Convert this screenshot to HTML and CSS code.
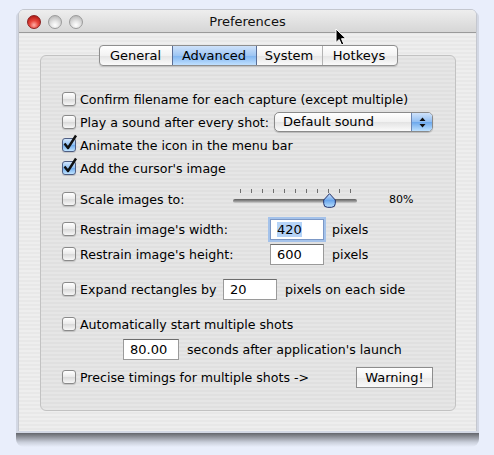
FILE: index.html
```html
<!DOCTYPE html>
<html lang="en">
<head>
    <meta charset="UTF-8">
    <title>Preferences</title>
    <link rel="stylesheet" href="styles.css">
</head>
<body>
    <div class="window">
        <div class="titlebar">
            <div class="lights">
                <span class="light red"></span>
                <span class="light"></span>
                <span class="light"></span>
            </div>
            <div class="title">Preferences</div>
        </div>

        <div class="content">
            <div class="tabs">
                <span class="tab">General</span>
                <span class="tab selected">Advanced</span>
                <span class="tab">System</span>
                <span class="tab">Hotkeys</span>
            </div>

            <div class="group">
                <div class="row r1">
                    <span class="check"></span>
                    <span class="label">Confirm filename for each capture (except multiple)</span>
                </div>
                <div class="row r2">
                    <span class="check"></span>
                    <span class="label w-sound">Play a sound after every shot:</span>
                    <div class="popup">
                        <span class="popup-text">Default sound</span>
                        <span class="popup-arrows">
                            <svg width="7" height="11" viewBox="0 0 7 11"><path d="M3.5 0.5 L6.5 4 H0.5 Z M0.5 7 H6.5 L3.5 10.5 Z" fill="#111"/></svg>
                        </span>
                    </div>
                </div>
                <div class="row r3">
                    <span class="check checked">
                        <svg width="16" height="17" viewBox="0 0 16 17"><path d="M2.5 9.5 L6 14 L14 1.5" fill="none" stroke="#111" stroke-width="2.4" stroke-linejoin="round"/></svg>
                    </span>
                    <span class="label">Animate the icon in the menu bar</span>
                </div>
                <div class="row r4">
                    <span class="check checked">
                        <svg width="16" height="17" viewBox="0 0 16 17"><path d="M2.5 9.5 L6 14 L14 1.5" fill="none" stroke="#111" stroke-width="2.4" stroke-linejoin="round"/></svg>
                    </span>
                    <span class="label">Add the cursor's image</span>
                </div>
                <div class="row r5">
                    <span class="check"></span>
                    <span class="label w-scale">Scale images to:</span>
                    <div class="slider">
                        <div class="ticks"></div>
                        <div class="track"></div>
                        <div class="rail">
                            <svg class="knob" style="left: 80%" width="13" height="15" viewBox="0 0 13 15">
                                <defs>
                                    <linearGradient id="kg" x1="0" y1="0" x2="0" y2="1">
                                        <stop offset="0" stop-color="#cfe3fb"/>
                                        <stop offset="0.5" stop-color="#6aa6ec"/>
                                        <stop offset="1" stop-color="#b9e0ff"/>
                                    </linearGradient>
                                </defs>
                                <path d="M6.5 0.7 L12.3 7 V10.5 A3.8 3.8 0 0 1 8.5 14.3 H4.5 A3.8 3.8 0 0 1 0.7 10.5 V7 Z" fill="url(#kg)" stroke="#1f2f6a" stroke-width="1"/>
                            </svg>
                        </div>
                    </div>
                    <span class="percent">80%</span>
                </div>
                <div class="row r6">
                    <span class="check"></span>
                    <span class="label w-restrain">Restrain image's width:</span>
                    <span class="field focused"><span class="sel">420</span></span>
                    <span class="unit">pixels</span>
                </div>
                <div class="row r7">
                    <span class="check"></span>
                    <span class="label w-restrain">Restrain image's height:</span>
                    <span class="field">600</span>
                    <span class="unit">pixels</span>
                </div>
                <div class="row r8">
                    <span class="check"></span>
                    <span class="label w-expand">Expand rectangles by</span>
                    <span class="field">20</span>
                    <span class="unit">pixels on each side</span>
                </div>
                <div class="row r9">
                    <span class="check"></span>
                    <span class="label">Automatically start multiple shots</span>
                </div>
                <div class="row r10">
                    <span class="field wide">80.00</span>
                    <span class="unit">seconds after application's launch</span>
                </div>
                <div class="row r11">
                    <span class="check"></span>
                    <span class="label">Precise timings for multiple shots -&gt;</span>
                    <span class="button">Warning!</span>
                </div>
            </div>
        </div>

        <!-- mouse pointer -->
        <svg class="cursor" width="12" height="18" viewBox="0 0 12 18">
            <path d="M1 1 V14.5 L4.2 11.5 L6.6 17 L8.8 16 L6.5 10.7 H11 Z" fill="#000" stroke="#fff" stroke-width="1" stroke-linejoin="round"/>
        </svg>
    </div>
    <div class="drop-shadow"></div>
</body>
</html>
```

FILE: styles.css
```css
body {
    margin: 0;
    padding: 10px 0 0 19px;
    background-color: #e9eefb;
    font-family: 'DejaVu Sans', 'Liberation Sans', sans-serif;
    font-size: 12.6px;
    color: #000;
}

.window {
    position: relative;
    width: 457px;
    height: 421px;
    border-radius: 5px 5px 0 0;
    background: repeating-linear-gradient(#eeeeee 0 2px, #e8e8e8 2px 4px);
    box-shadow: 1px 0 0 #c4c7cf, -1px 0 0 #c4c7cf, 0 -1px 0 #c4c7cf, 3px 2px 0 #d3d8e4, -3px 2px 0 #d3d8e4;
}

/* soft shadow under the window */
.drop-shadow {
    width: 463px;
    height: 16px;
    margin-left: -3px;
    border-radius: 0 0 8px 8px;
    background: linear-gradient(#4d4f55, #8b8e96 35%, #c9ceda 70%, #e9eefb);
}

/* title bar */
.titlebar {
    position: relative;
    height: 22px;
    border-bottom: 1px solid #9a9a9a;
    border-radius: 5px 5px 0 0;
    background: linear-gradient(#eeeeee, #d6d6d6);
    display: flex;
    align-items: center;
    justify-content: center;
}

.lights {
    position: absolute;
    left: 8px;
    top: 5px;
    display: flex;
    gap: 7px;
}

.light {
    width: 12px;
    height: 12px;
    border-radius: 50%;
    border: 1px solid #9b9b9b;
    background: radial-gradient(circle at 50% 75%, #ffffff 0, #e6e6e6 35%, #bdbdbd 80%);
}

.light.red {
    border-color: #8b1f1f;
    background: radial-gradient(circle at 50% 75%, #ffb0a8 0, #e8463c 40%, #a81510 90%);
}

.title {
    font-size: 13px;
    color: #111;
    margin-top: 1px;
}

/* content */
.content {
    padding: 12px 20px 0 21px;
}

.tabs {
    position: relative;
    z-index: 1;
    display: flex;
    width: 297px;
    height: 19px;
    margin: 0 auto;
    border: 1px solid #8e8e8e;
    border-radius: 4px;
    background: linear-gradient(#ffffff, #f2f2f2 50%, #e4e4e4 51%, #fbfbfb);
    box-shadow: 0 1px 1px rgba(0, 0, 0, 0.15);
    overflow: hidden;
}

.tab {
    display: flex;
    align-items: center;
    justify-content: center;
    font-size: 13px;
    border-left: 1px solid #b3b3b3;
}

.tab:nth-child(1) { width: 72px; border-left: none; }
.tab:nth-child(2) { width: 84px; }
.tab:nth-child(3) { width: 65px; }
.tab:nth-child(4) { width: 73px; }

.tab.selected {
    border-left-color: #5a6e96;
    border-right: 1px solid #5a6e96;
    width: 83px;
    background: linear-gradient(#cfe2fa, #9ec6f3 50%, #7fb4ef 51%, #c0e0ff);
}

.tab.selected + .tab {
    border-left: none;
}

.group {
    margin-top: -11px;
    height: 322px;
    padding: 32px 22px 0 21px;
    border: 1px solid #c2c2c2;
    border-radius: 6px;
    background: repeating-linear-gradient(#e6e6e6 0 2px, #e0e0e0 2px 4px);
}

.row {
    display: flex;
    align-items: center;
    height: 22px;
}

.r2, .r3, .r4 { margin-top: 1px; }
.r5 { margin-top: 9px; }
.r6 { margin-top: 8px; }
.r7 { margin-top: 3px; }
.r8 { margin-top: 13px; }
.r9 { margin-top: 13px; }
.r10 { margin-top: 3px; padding-left: 61px; }
.r11 { margin-top: 6px; }

.check {
    position: relative;
    flex: none;
    width: 12px;
    height: 12px;
    margin-right: 4px;
    border: 1px solid #8a8a8a;
    border-radius: 3px;
    background: linear-gradient(#ffffff, #e9e9e9 50%, #d9d9d9 51%, #f7f7f7);
    box-shadow: 0 1px 1px rgba(0, 0, 0, 0.15);
}

.check.checked {
    border-color: #4f5e83;
    background: linear-gradient(#d2e5fb, #8ebff3 50%, #6eaaec 51%, #bfe3ff);
}

.check svg {
    position: absolute;
    left: -1px;
    top: -5px;
}

.label {
    white-space: nowrap;
}

.w-sound { width: 194px; }
.w-scale { width: 153px; }
.w-restrain { width: 190px; }
.w-expand { width: 143px; }

/* popup button */
.popup {
    display: flex;
    width: 157px;
    height: 18px;
    border: 1px solid #8a8a8a;
    border-radius: 5px;
    background: linear-gradient(#ffffff, #f1f1f1 50%, #e3e3e3 51%, #fbfbfb);
    box-shadow: 0 1px 1px rgba(0, 0, 0, 0.2);
    overflow: hidden;
}

.popup-text {
    flex: 1;
    padding-left: 8px;
    font-size: 13px;
    line-height: 18px;
}

.popup-arrows {
    width: 20px;
    display: flex;
    align-items: center;
    justify-content: center;
    border-left: 1px solid #6c86b3;
    background: linear-gradient(#cfe2fa, #8fbdf2 50%, #6ba7ec 51%, #bde1ff);
}

/* slider */
.slider {
    position: relative;
    width: 124px;
    height: 22px;
}

.ticks {
    position: absolute;
    left: 7px;
    top: 1px;
    width: 112px;
    height: 4px;
    background: repeating-linear-gradient(90deg, #6f6f6f 0 1px, transparent 1px 11px);
}

.track {
    position: absolute;
    left: 0;
    right: 0;
    top: 11px;
    height: 4px;
    border-radius: 2px;
    background: linear-gradient(#5c5c5c, #9a9a9a 60%, #d0d0d0);
}

.rail {
    position: absolute;
    left: 8px;
    top: 5px;
    width: 110px;
    height: 15px;
}

.knob {
    position: absolute;
    top: 0;
    margin-left: -6px;
}

.percent {
    margin-left: 32px;
    font-size: 11px;
}

/* text fields */
.field {
    flex: none;
    box-sizing: border-box;
    width: 54px;
    height: 21px;
    padding: 0 6px;
    border: 1px solid #9a9a9a;
    border-top-color: #6d6d6d;
    background: #fff;
    font-size: 13px;
    line-height: 19px;
}

.field.wide {
    width: 56px;
}

.field.focused {
    border-color: #7c98c6;
    box-shadow: 0 0 0 2px #a4c2ea;
}

.sel {
    background-color: #b5d3f7;
}

.unit {
    margin-left: 8px;
    white-space: nowrap;
}

/* push button */
.button {
    margin-left: auto;
    box-sizing: border-box;
    width: 77px;
    height: 21px;
    border: 1px solid #8d8d8d;
    background: linear-gradient(#ffffff, #f3f3f3 50%, #e8e8e8 51%, #fafafa);
    text-align: center;
    font-size: 13px;
    line-height: 19px;
}

.cursor {
    position: absolute;
    left: 316px;
    top: 18px;
}
```
